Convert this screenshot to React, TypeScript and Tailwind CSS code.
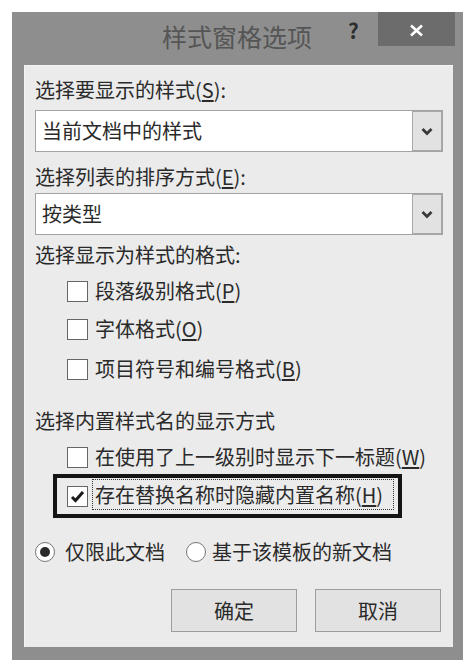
import React from 'react';

type Props = {
  children?: React.ReactNode;
};

const font = "font-['Noto_Sans_CJK_SC','Liberation_Sans',sans-serif]";

const Key = ({ children }: Props) => <span className="underline underline-offset-2">{children}</span>;

const Label = ({ children, className = '' }: Props & { className?: string }) => (
  <div className={`h-[24px] leading-[24px] text-[20px] text-[#2a2a2a] ${className}`}>{children}</div>
);

const Dropdown = ({ value, className = '' }: { value: string; className?: string }) => (
  <div className={`flex h-[42px] border border-[#a3a3a3] bg-white ${className}`}>
    <div className="flex-1 flex items-center pl-[6px] text-[20px] text-[#2a2a2a]">{value}</div>
    <div className="w-[30px] flex items-center justify-center bg-[#e2e2e2] border border-[#a8a8a8]">
      <svg width="12" height="9" viewBox="0 0 12 9">
        <path d="M1.5 2 L6 6.5 L10.5 2" stroke="#3a3a3a" strokeWidth="2.8" fill="none" />
      </svg>
    </div>
  </div>
);

const Box = ({ checked }: { checked?: boolean }) => (
  <div className="w-[21px] h-[21px] shrink-0 border border-[#666] bg-white flex items-center justify-center">
    {checked && (
      <svg width="15" height="13" viewBox="0 0 15 13">
        <path d="M2 7 L5.5 10.5 L13 2" stroke="#1a1a1a" strokeWidth="3" fill="none" />
      </svg>
    )}
  </div>
);

const Check = ({ children, className = '' }: Props & { className?: string }) => (
  <div className={`h-[24px] flex items-center gap-[7px] pl-[32px] text-[20px] text-[#2a2a2a] ${className}`}>
    <Box />
    <span className="leading-[24px]">{children}</span>
  </div>
);

const Radio = ({ on }: { on?: boolean }) => (
  <div className="w-[20px] h-[20px] shrink-0 rounded-full border border-[#777] bg-white flex items-center justify-center">
    {on && <div className="w-[10px] h-[10px] rounded-full bg-[#2a2a2a]" />}
  </div>
);

const Button = ({ children }: Props) => (
  <div className="w-[126px] h-[43px] flex items-center justify-center bg-[#e2e2e2] border border-[#9d9d9d] text-[20px] text-[#2a2a2a]">
    {children}
  </div>
);

export default function App() {
  return (
    <div className={`w-[476px] h-[670px] bg-white pt-[12px] pl-[12px] ${font}`}>
      <div className="w-[451px] h-[648px] bg-[#8e8e8e] flex flex-col">
        <div className="h-[53px] flex items-start">
          <div className="ml-[150px] mt-[12px] text-[25px] leading-[25px] text-[#555]">样式窗格选项</div>
          <div className="ml-[36px] mt-[8px] text-[21px] leading-[20px] font-bold text-[#2e2e2e]">?</div>
          <div className="ml-auto mr-[8px] w-[77px] h-[34px] bg-[#6c6c6c] flex items-center justify-center pt-[3px]">
            <svg width="15" height="13" viewBox="0 0 15 13">
              <path d="M2 1.5 L13 11.5 M13 1.5 L2 11.5" stroke="#fff" strokeWidth="2.6" />
            </svg>
          </div>
        </div>
        <div className="ml-[12px] mr-[10px] h-[582px] bg-[#ebebeb] border-t border-l border-[#f4f4f4] flex flex-col pl-[10px] pr-[10px]">
          <Label className="mt-[12px]">
            选择要显示的样式(<Key>S</Key>):
          </Label>
          <Dropdown value="当前文档中的样式" className="mt-[8px]" />
          <Label className="mt-[13px]">
            选择列表的排序方式(<Key>E</Key>):
          </Label>
          <Dropdown value="按类型" className="mt-[4px]" />
          <Label className="mt-[8px]">选择显示为样式的格式:</Label>
          <Check className="mt-[12px]">
            段落级别格式(<Key>P</Key>)
          </Check>
          <Check className="mt-[14px]">
            字体格式(<Key>O</Key>)
          </Check>
          <Check className="mt-[16px]">
            项目符号和编号格式(<Key>B</Key>)
          </Check>
          <Label className="mt-[28px]">选择内置样式名的显示方式</Label>
          <Check className="mt-[12px]">
            在使用了上一级别时显示下一标题(<Key>W</Key>)
          </Check>
          <div className="mt-[5px] ml-[18px] w-[349px] h-[44px] border-[4px] border-[#141414] flex items-center pl-[10px] pr-[4px]">
            <Box checked />
            <div className="ml-[4px] flex-1 h-[31px] mb-[3px] border border-dotted border-[#333] pl-[2px] flex items-center text-[20px] text-[#2a2a2a]">
              存在替换名称时隐藏内置名称(<Key>H</Key>)
            </div>
          </div>
          <div className="mt-[22px] h-[24px] flex items-center text-[20px] text-[#2a2a2a]">
            <Radio on />
            <span className="ml-[10px]">仅限此文档</span>
            <div className="ml-[21px]">
              <Radio />
            </div>
            <span className="ml-[6px]">基于该模板的新文档</span>
          </div>
          <div className="mt-[25px] flex justify-end gap-[18px] pr-[2px]">
            <Button>确定</Button>
            <Button>取消</Button>
          </div>
        </div>
      </div>
    </div>
  );
}
